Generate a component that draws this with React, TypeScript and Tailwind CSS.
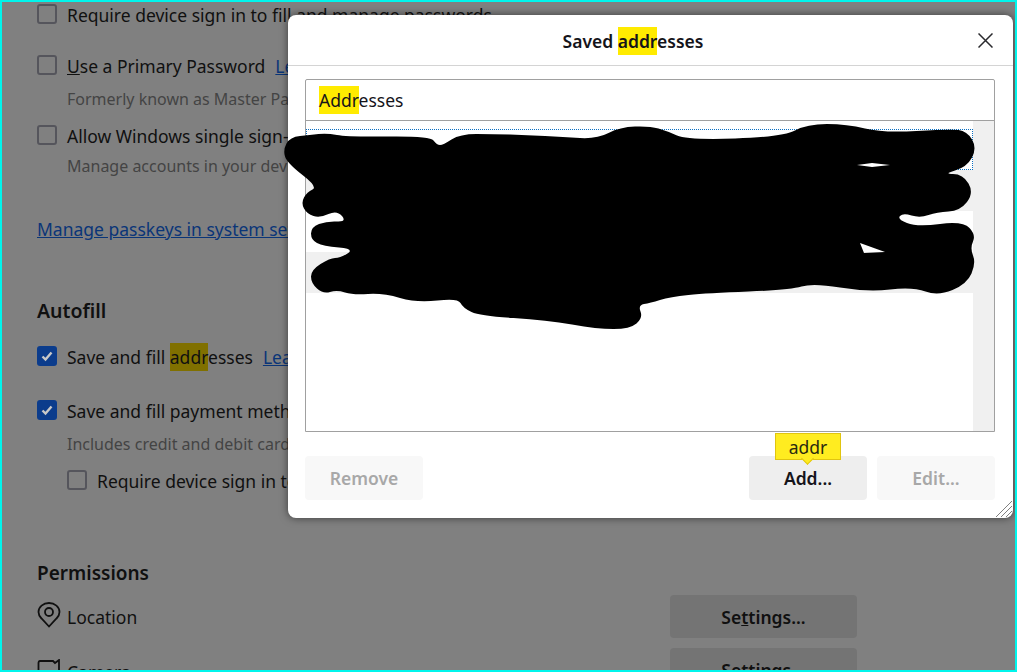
import type { ReactNode } from "react";

const font = { fontFamily: '"Noto Sans", "Open Sans", sans-serif' };

const outline =
  "283,150 290,137 310,135 327,133 347,137 430,136 437,145 443,145 460,134 493,134 527,135 563,137 597,139 620,127 650,126 667,131 687,140 783,137 807,124 847,124 883,133 950,129 967,131 977,148 967,167 943,174 963,174 974,193 960,211 937,212 920,218 903,213 897,219 917,227 963,221 976,235 970,248 976,263 967,284 938,296 913,287 867,292 813,283 790,290 707,293 670,297 650,303 638,305 643,318 630,329 597,329 547,320 480,316 463,308 458,298 417,303 383,293 353,295 337,290 323,294 311,283 311,270 330,258 340,258 355,249 323,246 311,240 311,227 327,221 347,222 337,210 320,218 307,214 301,203 307,192 318,187 287,163";

// round the hand-drawn outline: each vertex becomes a control point between midpoints
const pts = outline.split(" ").map((p) => p.split(",").map(Number));
const mid = (a: number[], b: number[]) => `${(a[0] + b[0]) / 2} ${(a[1] + b[1]) / 2}`;
const scribble =
  `M${mid(pts[pts.length - 1], pts[0])} ` +
  pts.map((p, i) => `Q${p[0]} ${p[1]} ${mid(p, pts[(i + 1) % pts.length])}`).join(" ") +
  " Z M857 165 L872 163 L890 165 L872 167 Z M860 243 L885 252 L864 253 Z";

function Check({ checked }: { checked?: boolean }) {
  return (
    <span
      className={
        checked
          ? "flex h-5 w-5 shrink-0 items-center justify-center rounded-[3px] bg-[#0b3c8c]"
          : "h-5 w-5 shrink-0 rounded-[3px] border-2 border-[#55555c]"
      }
    >
      {checked && (
        <svg width="14" height="14" viewBox="0 0 14 14" fill="none">
          <path d="M2.5 7.5 L5.5 10.5 L11.5 3.5" stroke="#c8c8c8" strokeWidth="2.4" />
        </svg>
      )}
    </span>
  );
}

function Row({ className, children }: { className: string; children: ReactNode }) {
  return <div className={`flex h-5 items-center gap-[10px] whitespace-nowrap ${className}`}>{children}</div>;
}

function Label({ children, link }: { children: ReactNode; link?: boolean }) {
  return <span className={link ? "pt-[2px] text-[#0a3578] underline" : "pt-[2px]"}>{children}</span>;
}

function Sub({ children, className }: { children: string; className: string }) {
  return <p className={`h-6 pl-[30px] text-[16px] leading-6 whitespace-nowrap text-[#444444] ${className}`}>{children}</p>;
}

function DimButton() {
  return (
    <span className="flex h-[43px] w-[187px] items-center justify-center rounded-[4px] bg-[#747474] pt-[2px] text-[17.5px] font-semibold text-[#101010]">
      <span>
        Se<span className="underline">t</span>tings...
      </span>
    </span>
  );
}

export default function App() {
  return (
    <div style={font} className="relative h-[672px] w-[1017px] overflow-hidden border-2 border-[#00f5ec] bg-[#808080] text-[#101010]">
      <div className="flex flex-col pl-[35px] pt-[2px] text-[17.5px]">
        <Row className="">
          <Check />
          <Label>Require device sign in to fill and manage passwords</Label>
        </Row>
        <Row className="mt-[31px]">
          <Check />
          <Label>
            <span className="underline">U</span>se a Primary Password
          </Label>
          <Label link>Learn more</Label>
        </Row>
        <Sub className="mt-[12px]">Formerly known as Master Password</Sub>
        <Row className="mt-[14px]">
          <Check />
          <Label>Allow Windows single sign-on for Microsoft</Label>
        </Row>
        <Sub className="mt-[9px]">Manage accounts in your device settings</Sub>
        <p className="mt-[39px] h-6 leading-6 whitespace-nowrap text-[#0a3578] underline">Manage passkeys in system settings</p>
        <h2 className="mt-[56px] h-7 text-[19.5px] leading-7 font-semibold">Autofill</h2>
        <Row className="mt-[21px]">
          <Check checked />
          <Label>
            Save and fill <span className="bg-[#807000] py-[2px]">addr</span>esses
          </Label>
          <Label link>Learn more</Label>
        </Row>
        <Row className="mt-[34px]">
          <Check checked />
          <Label>Save and fill payment methods</Label>
        </Row>
        <Sub className="mt-[12px]">Includes credit and debit cards</Sub>
        <Row className="mt-[14px] pl-[30px]">
          <Check />
          <Label>Require device sign in to fill</Label>
        </Row>
        <h2 className="mt-[68px] h-7 pt-px text-[19px] leading-7 font-semibold">Permissions</h2>
        <div className="mt-[9px] flex w-[820px] items-center justify-between">
          <span className="flex items-center gap-[6px]">
            <svg width="24" height="26" viewBox="0 0 24 26" fill="none" stroke="#101010" strokeWidth="1.8" className="-mt-[3px]">
              <path d="M12 24.5 L4.5 16.5 Q1.5 13.5 1.5 10 A10.5 9 0 0 1 22.5 10 Q22.5 13.5 19.5 16.5 Z" />
              <circle cx="12" cy="10" r="4" />
            </svg>
            <Label>Location</Label>
          </span>
          <DimButton />
        </div>
        <div className="mt-[10px] flex w-[820px] items-start justify-between">
          <span className="flex items-center gap-[6px] pt-[9px]">
            <svg width="24" height="24" viewBox="0 0 24 24" fill="none" stroke="#101010" strokeWidth="1.8">
              <path d="M3 2 H16 L18 4 L22 1 V20 H3 Q1.5 20 1.5 18 V4 Q1.5 2 3 2 Z" />
            </svg>
            <Label>Camera</Label>
          </span>
          <DimButton />
        </div>
      </div>

      {/* dialog sits over the dimmed page */}
      <div className="absolute left-[286px] top-[13px] flex h-[503px] w-[725px] flex-col rounded-[8px] bg-white shadow-[0_0_9px_rgba(0,0,0,0.55)]">
        <div className="flex h-[51px] shrink-0 items-center border-b border-[#d4d4d4] pr-[20px]">
          <h1 className="flex-1 pt-[2px] text-center text-[17.5px] font-semibold text-[#15141a]">
            Saved <span className="bg-[#ffeb00] py-[2px]">addr</span>esses
          </h1>
          <svg width="15" height="15" viewBox="0 0 15 15" fill="none" stroke="#2a2a2e" strokeWidth="1.5">
            <path d="M0.5 0.5 L14.5 14.5 M14.5 0.5 L0.5 14.5" />
          </svg>
        </div>

        <div className="ml-[17px] mr-[18px] mt-[13px] flex h-[353px] flex-col rounded-t-[2px] border border-[#a0a0a0]">
          <div className="flex h-[41px] shrink-0 items-center border-b border-[#a0a0a0] pl-[13px] text-[17.5px] text-[#15141a]">
            <span>
              <span className="bg-[#ffeb00] py-[2px]">Addr</span>esses
            </span>
          </div>
          <div className="flex min-h-0 flex-1">
            <div className="flex-1 pt-2">
              <div className="h-[41px] border border-dotted border-[#0a6fc2]" />
              <div className="h-[41px] bg-[#f0f0f0]" />
              <div className="h-[41px]" />
              <div className="h-[41px] bg-[#f0f0f0]" />
            </div>
            <div className="w-[21px] bg-[#f0f0f0]" />
          </div>
        </div>

        <div className="mt-[24px] flex justify-between pl-[17px] pr-[18px] text-[17.5px]">
          <button className="h-11 w-[118px] rounded-[4px] bg-[#f8f8f8] font-semibold text-[#a8a8a8]">Remove</button>
          <div className="flex gap-[10px]">
            <button className="h-11 w-[118px] rounded-[4px] bg-[#eeeeee] font-semibold text-[#15141a]">Add...</button>
            <button className="h-11 w-[118px] rounded-[4px] bg-[#f8f8f8] font-semibold text-[#a8a8a8]">Edit...</button>
          </div>
        </div>

        <div className="absolute left-[487px] top-[418px] flex h-[27px] w-[66px] items-center justify-center border border-[#e0c410] bg-[#ffec20] pt-[2px] text-[17.5px] text-[#2a2a10]">
          addr
          <span className="absolute left-[27px] top-[20px] h-[9px] w-[9px] rotate-45 border-r border-b border-[#e0c410] bg-[#ffec20]" />
        </div>

        <svg className="absolute bottom-0 right-0" width="18" height="18" viewBox="0 0 18 18" fill="none" stroke="#808080" strokeWidth="1">
          <path d="M1 17 L17 1 M6 17 L17 6 M11 17 L17 11" />
        </svg>
      </div>

      {/* the redaction scrawl from the screenshot */}
      <svg className="absolute left-[-2px] top-[-2px]" width="1017" height="672" viewBox="0 0 1017 672">
        <path d={scribble} fill="#000000" fillRule="evenodd" />
      </svg>
    </div>
  );
}
